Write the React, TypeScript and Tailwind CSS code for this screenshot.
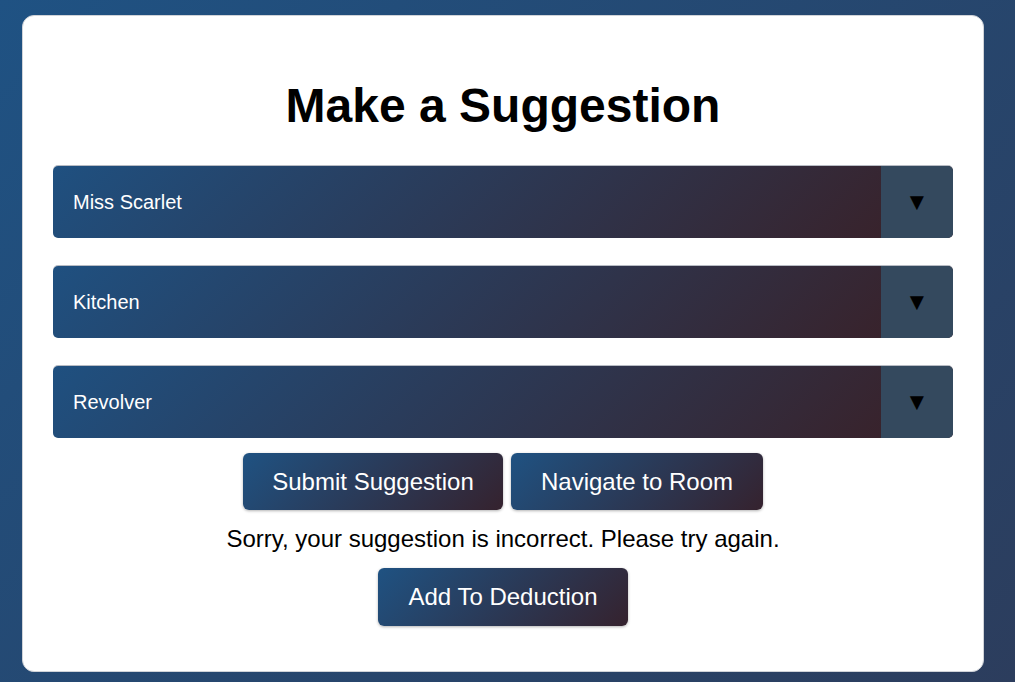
import React, { useState } from "react";

const SUSPECTS = ["Miss Scarlet", "Colonel Mustard", "Mrs. White", "Mr. Green", "Mrs. Peacock", "Professor Plum"];
const ROOMS = ["Kitchen", "Ballroom", "Conservatory", "Dining Room", "Billiard Room", "Library", "Lounge", "Hall", "Study"];
const WEAPONS = ["Revolver", "Candlestick", "Knife", "Lead Pipe", "Rope", "Wrench"];

function Dropdown({ value, options, onChange }: { value: string; options: string[]; onChange: (v: string) => void }) {
  return (
    <div className="relative flex h-[72px] w-full overflow-hidden rounded-[5px] bg-[linear-gradient(135deg,#1f5080,#3a1f25)] shadow-[0_-1px_0_#b8bcc4]">
      <select
        value={value}
        onChange={(e) => onChange(e.target.value)}
        className="h-full flex-1 appearance-none bg-transparent pl-5 text-[20px] text-white outline-none"
      >
        {options.map((o) => (
          <option key={o} value={o} className="text-black">
            {o}
          </option>
        ))}
      </select>
      <div className="pointer-events-none flex w-[72px] items-center justify-center bg-[#34495e] text-[24px] text-black">
        ▼
      </div>
    </div>
  );
}

export default function App() {
  const [suspect, setSuspect] = useState(SUSPECTS[0]);
  const [room, setRoom] = useState(ROOMS[0]);
  const [weapon, setWeapon] = useState(WEAPONS[0]);

  const btn =
    "rounded-[6px] bg-[linear-gradient(135deg,#1f5282,#35222e)] text-[24px] text-white shadow-[0_1px_3px_rgba(0,0,0,0.3)] cursor-pointer";

  return (
    <div className="min-h-screen bg-[linear-gradient(135deg,#1f5283,#2c3d5d)] pl-[22px] pt-[15px] font-['Liberation_Sans',Arial,sans-serif]">
      <div className="flex h-[657px] w-[962px] flex-col items-center rounded-[12px] border border-[#d0d3d8] bg-white px-[30px] pt-[62px]">
        <h1 className="text-[48px] font-bold leading-[55px] text-black">Make a Suggestion</h1>

        {/* Selects */}
        <div className="mt-[33px] flex w-full flex-col gap-[28px]">
          <Dropdown value={suspect} options={SUSPECTS} onChange={setSuspect} />
          <Dropdown value={room} options={ROOMS} onChange={setRoom} />
          <Dropdown value={weapon} options={WEAPONS} onChange={setWeapon} />
        </div>

        {/* Actions */}
        <div className="mt-[15px] flex gap-[8px]">
          <button className={`${btn} h-[57px] w-[260px]`}>Submit Suggestion</button>
          <button className={`${btn} h-[57px] w-[252px]`}>Navigate to Room</button>
        </div>

        <p className="mt-[15px] text-[24px] leading-[27px] text-black">
          Sorry, your suggestion is incorrect. Please try again.
        </p>

        <button className={`${btn} mt-[16px] h-[58px] w-[250px]`}>Add To Deduction</button>
      </div>
    </div>
  );
}
